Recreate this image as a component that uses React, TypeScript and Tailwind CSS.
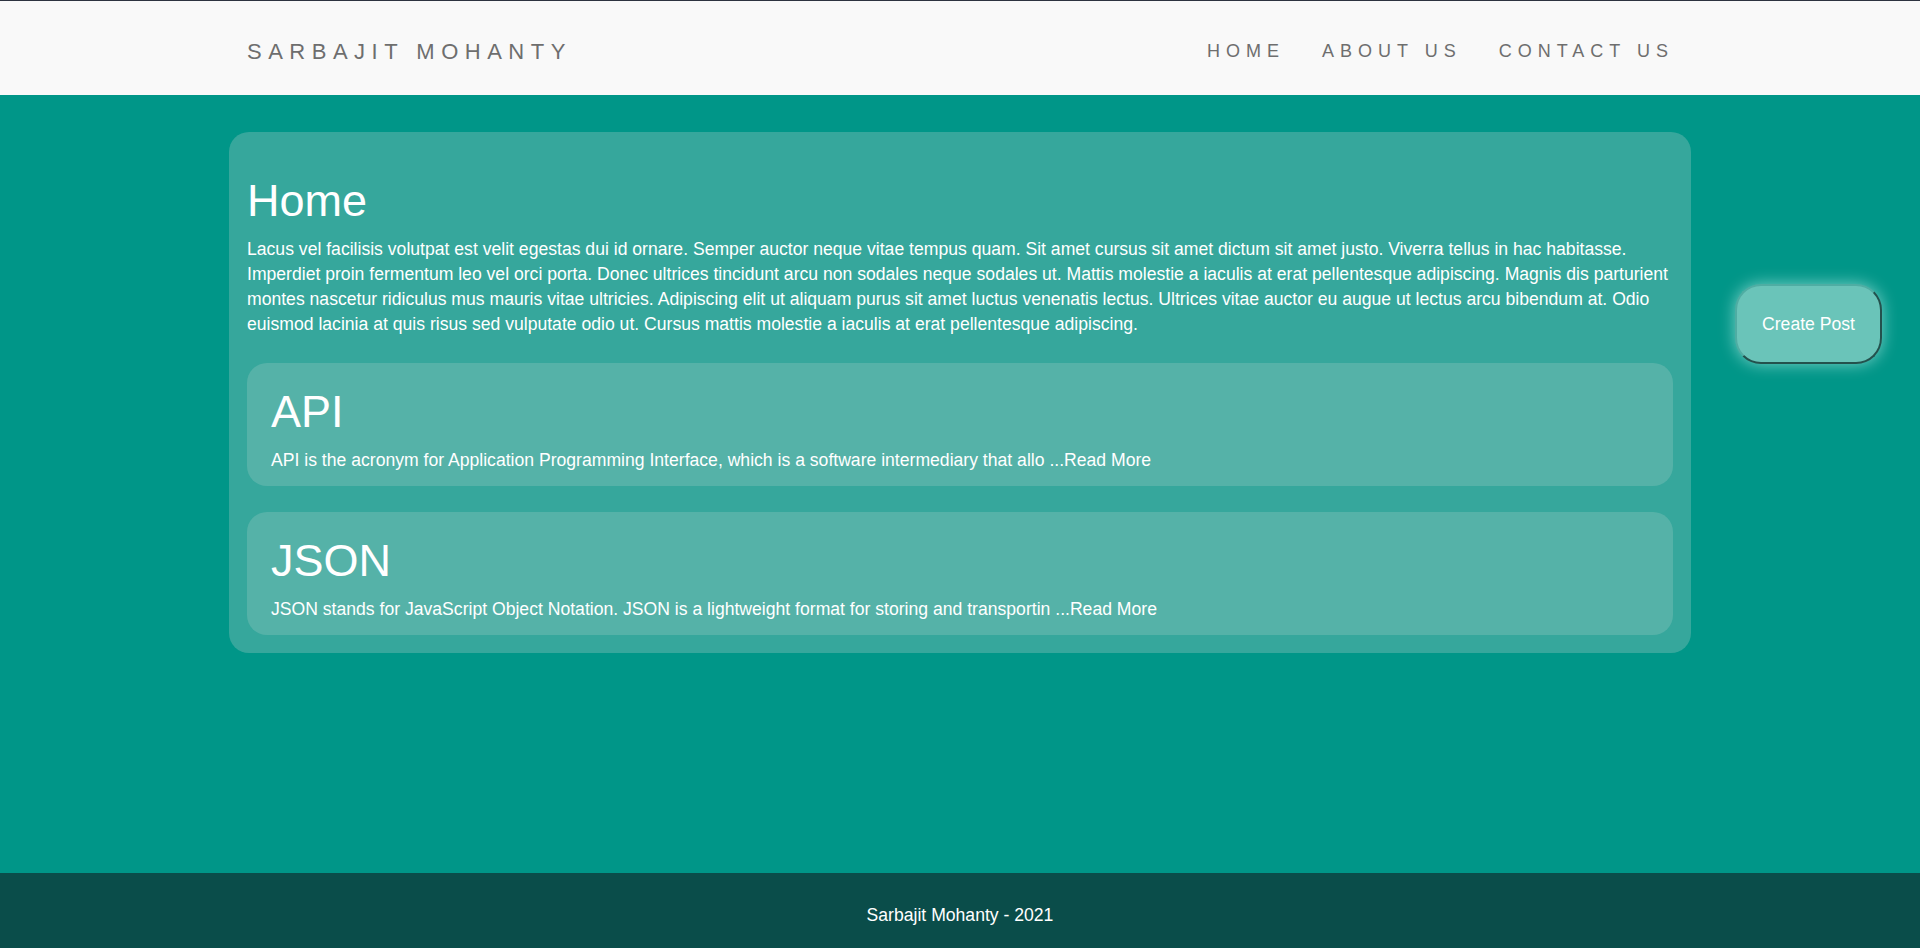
import type React from "react";

const posts = [
  {
    title: "API",
    body: "API is the acronym for Application Programming Interface, which is a software intermediary that allo",
  },
  {
    title: "JSON",
    body: "JSON stands for JavaScript Object Notation. JSON is a lightweight format for storing and transportin",
  },
];

const App: React.FC = () => {
  return (
    <div className="min-h-screen flex flex-col bg-[#009688] font-['Liberation_Sans',Arial,sans-serif]">
      {/* Header */}
      <header className="h-[95px] bg-[#f9f9f9] border-t border-[#2d3340]">
        <div className="w-[1462px] mx-auto h-full pl-[18px] pr-[17px] pt-[6px] flex items-center justify-between text-[#6e6e6e]">
          <div className="text-[22px] tracking-[6.5px]">SARBAJIT MOHANTY</div>
          <nav className="flex items-center gap-[37px] text-[18px] tracking-[6px]">
            <a href="#">HOME</a>
            <a href="#">ABOUT US</a>
            <a href="#">CONTACT US</a>
          </nav>
        </div>
      </header>

      {/* Main */}
      <main className="flex-1 grid grid-cols-[1fr_1462px_1fr] pt-[37px]">
        <div></div>
        <section className="self-start bg-[#36a79c] rounded-[20px] px-[18px] pt-[43px] pb-[18px] text-white">
          <h1 className="text-[45px] leading-[52px]">Home</h1>
          <p className="mt-[10px] text-[17.6px] leading-[25px]">
            Lacus vel facilisis volutpat est velit egestas dui id ornare. Semper auctor neque vitae tempus quam. Sit amet
            cursus sit amet dictum sit amet justo. Viverra tellus in hac habitasse. Imperdiet proin fermentum leo vel orci
            porta. Donec ultrices tincidunt arcu non sodales neque sodales ut. Mattis molestie a iaculis at erat
            pellentesque adipiscing. Magnis dis parturient montes nascetur ridiculus mus mauris vitae ultricies. Adipiscing
            elit ut aliquam purus sit amet luctus venenatis lectus. Ultrices vitae auctor eu augue ut lectus arcu bibendum
            at. Odio euismod lacinia at quis risus sed vulputate odio ut. Cursus mattis molestie a iaculis at erat
            pellentesque adipiscing.
          </p>
          <div className="mt-[26px] flex flex-col gap-[26px]">
            {posts.map((post) => (
              <div key={post.title} className="bg-[#55b2a8] rounded-[20px] px-[24px] pt-[23px] pb-[16px]">
                <h2 className="text-[45px] leading-[52px]">{post.title}</h2>
                <p className="mt-[12px] text-[17.6px] leading-[20px]">
                  {post.body} <a href="#">...Read More</a>
                </p>
              </div>
            ))}
          </div>
        </section>
        <div className="pl-[44px] pt-[152px]">
          <button className="w-[147px] h-[80px] rounded-[26px] bg-[#6ac4b9] text-white text-[17.6px] border-2 border-t-[#4fada3] border-l-[#4fada3] border-b-[#24514d] border-r-[#24514d] shadow-[0_0_16px_rgba(220,255,250,0.55)]">
            Create Post
          </button>
        </div>
      </main>

      {/* Footer */}
      <footer className="h-[75px] pt-[10px] bg-[#0a4d4a] flex items-center justify-center text-white text-[17.6px]">
        Sarbajit Mohanty - 2021
      </footer>
    </div>
  );
};

export default App;
